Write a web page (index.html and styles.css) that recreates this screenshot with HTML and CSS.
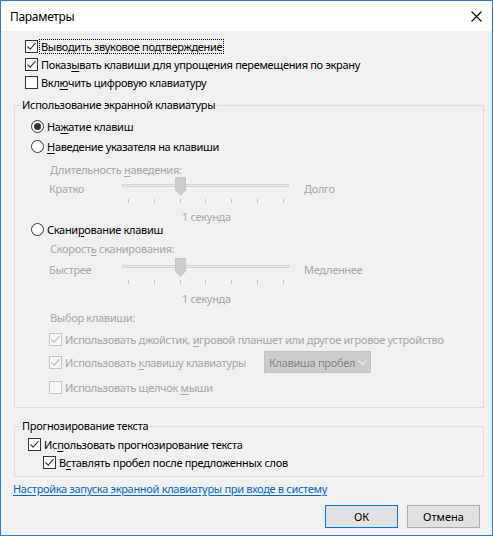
FILE: index.html
```html
<!DOCTYPE html>
<html lang="ru">
<head>
  <meta charset="UTF-8">
  <title>Параметры</title>
  <link rel="stylesheet" href="styles.css">
</head>

<body>

  <div class="window">

    <!-- Title bar -->
    <div class="titlebar">
      <span class="title">Параметры</span>
      <svg class="close" width="11" height="11" viewBox="0 0 11 11">
        <path d="M0.5 0.5 L10.5 10.5 M10.5 0.5 L0.5 10.5" stroke="#000" stroke-width="1.1" fill="none"/>
      </svg>
    </div>

    <div class="content">

      <!-- General options -->
      <div class="top-options">
        <div class="check">
          <span class="box"><svg viewBox="0 0 11 11"><path d="M1.5 5.5 L4.2 8.2 L9.5 2.2"/></svg></span>
          <span class="text focus">Выводить звуковое подтверждение</span>
        </div>
        <div class="check">
          <span class="box"><svg viewBox="0 0 11 11"><path d="M1.5 5.5 L4.2 8.2 L9.5 2.2"/></svg></span>
          <span class="text">Показ<u>ы</u>вать клавиши для упрощения перемещения по экрану</span>
        </div>
        <div class="check">
          <span class="box"></span>
          <span class="text">Вкл<u>ю</u>чить цифровую клавиатуру</span>
        </div>
      </div>

      <!-- On-screen keyboard mode -->
      <fieldset class="group group-mode">
        <legend>Использование экранной клавиатуры</legend>

        <div class="radio radio-first selected">
          <span class="dot"><span></span></span>
          <span class="text">На<u>ж</u>атие клавиш</span>
        </div>
        <div class="radio radio-second">
          <span class="dot"></span>
          <span class="text"><u>Н</u>аведение указателя на клавиши</span>
        </div>

        <div class="hint hint-hover">Длительность <u>н</u>аведения:</div>
        <div class="slider slider-hover">
          <span class="end-label">Кратко</span>
          <div class="track-area">
            <div class="track"></div>
            <svg class="thumb" width="11" height="19" viewBox="0 0 11 19">
              <polygon points="0.5,0.5 10.5,0.5 10.5,13 5.5,18.5 0.5,13"/>
            </svg>
            <div class="ticks"><i></i><i></i><i></i><i></i><i></i><i></i><i></i></div>
          </div>
          <span class="end-label end-right">Долго</span>
        </div>
        <div class="slider-value value-hover">1 секунда</div>

        <div class="radio radio-scan">
          <span class="dot"></span>
          <span class="text">Скани<u>р</u>ование клавиш</span>
        </div>

        <div class="hint hint-scan">Скорост<u>ь</u> сканирования:</div>
        <div class="slider slider-scan">
          <span class="end-label">Быстрее</span>
          <div class="track-area">
            <div class="track"></div>
            <svg class="thumb" width="11" height="19" viewBox="0 0 11 19">
              <polygon points="0.5,0.5 10.5,0.5 10.5,13 5.5,18.5 0.5,13"/>
            </svg>
            <div class="ticks"><i></i><i></i><i></i><i></i><i></i><i></i><i></i></div>
          </div>
          <span class="end-label end-right">Медленнее</span>
        </div>
        <div class="slider-value value-scan">1 секунда</div>

        <div class="hint hint-key">Выбор клавиши:</div>
        <div class="check disabled sub-check check-joystick">
          <span class="box"><svg viewBox="0 0 11 11"><path d="M1.5 5.5 L4.2 8.2 L9.5 2.2"/></svg></span>
          <span class="text">Использовать джойстик, <u>и</u>гровой планшет или другое игровое устройство</span>
        </div>
        <div class="check disabled sub-check check-key">
          <span class="box"><svg viewBox="0 0 11 11"><path d="M1.5 5.5 L4.2 8.2 L9.5 2.2"/></svg></span>
          <span class="text key-label">Использовать <u>к</u>лавишу клавиатуры</span>
          <div class="dropdown">
            <span class="dropdown-text">Клавиша пробел</span>
            <svg class="chevron" width="9" height="5" viewBox="0 0 9 5"><path d="M0.5 0.5 L4.5 4.5 L8.5 0.5"/></svg>
          </div>
        </div>
        <div class="check disabled sub-check check-mouse">
          <span class="box"></span>
          <span class="text">Использовать щелчок <u>м</u>ыши</span>
        </div>
      </fieldset>

      <!-- Text prediction -->
      <fieldset class="group group-predict">
        <legend>Прогнозирование текста</legend>
        <div class="check predict-main">
          <span class="box"><svg viewBox="0 0 11 11"><path d="M1.5 5.5 L4.2 8.2 L9.5 2.2"/></svg></span>
          <span class="text">Ис<u>п</u>ользовать прогнозирование текста</span>
        </div>
        <div class="check predict-space">
          <span class="box"><svg viewBox="0 0 11 11"><path d="M1.5 5.5 L4.2 8.2 L9.5 2.2"/></svg></span>
          <span class="text">В<u>с</u>тавлять пробел после предложенных слов</span>
        </div>
      </fieldset>

      <a class="link" href="#">Настройка запуска экранной клавиатуры при входе в систему</a>

      <div class="buttons">
        <button class="btn btn-default">ОК</button>
        <button class="btn">Отмена</button>
      </div>

    </div>
  </div>

</body>
</html>
```

FILE: styles.css
```css
body {
  margin: 0;
  background: #fff;
  font-family: "Noto Sans", "Liberation Sans", sans-serif;
  font-size: 11px;
  letter-spacing: -0.3px;
  color: #000;
}

u {
  text-decoration-thickness: 1px;
  text-underline-offset: 2px;
}

.window {
  width: 493px;
  height: 536px;
  box-sizing: border-box;
  border: 1px solid #2a7bc8;
  background: #f0f0f0;
  display: flex;
  flex-direction: column;
}

/* title bar */
.titlebar {
  height: 30px;
  flex: none;
  background: #fff;
  display: flex;
  align-items: center;
  justify-content: space-between;
  padding: 0 10px 0 9px;
  font-size: 12px;
}

.content {
  padding: 6px 8px 0 12px;
  display: flex;
  flex-direction: column;
}

/* checkboxes */
.check {
  display: flex;
  align-items: center;
  gap: 3px;
  height: 14px;
  white-space: nowrap;
}

.check .box {
  width: 13px;
  height: 13px;
  box-sizing: border-box;
  border: 1px solid #333;
  background: #fff;
  display: flex;
  flex: none;
}

.check .box svg {
  width: 11px;
  height: 11px;
  fill: none;
  stroke: #333;
  stroke-width: 1.1;
}

.check.disabled {
  color: #a6a6a6;
}

.check.disabled .box {
  border-color: #c6c6c6;
  background: #f7f7f7;
}

.check.disabled .box svg {
  stroke: #b9b9b9;
}

.top-options {
  margin-left: 12px;
  display: flex;
  flex-direction: column;
}

.top-options .check {
  height: 18px;
}

.focus {
  outline: 1px dotted #000;
  outline-offset: 0;
  padding: 0 1px;
  margin-left: -1px;
  line-height: 13px;
}

/* group boxes */
.group {
  margin: 0 0 0 1px;
  padding: 0;
  min-width: 0;
  width: 470px;
  box-sizing: border-box;
  border: 1px solid #dcdcdc;
  display: flex;
  flex-direction: column;
}

.group legend {
  margin-left: 5px;
  padding: 0 2px;
  line-height: 16px;
}

.group-mode {
  margin-top: 6px;
  padding-bottom: 13px;
}

.group-predict {
  margin-top: 10px;
  padding-bottom: 7px;
}

/* radio buttons */
.radio {
  display: flex;
  align-items: center;
  gap: 3px;
  height: 14px;
  margin-left: 16px;
}

.radio .dot {
  width: 13px;
  height: 13px;
  box-sizing: border-box;
  border: 1px solid #333;
  border-radius: 50%;
  background: #fff;
  display: flex;
  align-items: center;
  justify-content: center;
}

.radio.selected .dot span {
  width: 7px;
  height: 7px;
  border-radius: 50%;
  background: #333;
}

.radio-first { margin-top: 6px; }
.radio-second { margin-top: 6px; }
.radio-scan { margin-top: 0; }

/* greyed captions */
.hint {
  color: #a6a6a6;
  margin-left: 35px;
  line-height: 14px;
}

.hint-hover { margin-top: 10px; }
.hint-scan { margin-top: 6px; }
.hint-key { margin-top: 7px; }

/* sliders */
.slider {
  display: grid;
  grid-template-columns: 73px 167px auto;
  align-items: start;
  margin-left: 34px;
  color: #a6a6a6;
  line-height: 14px;
}

.slider-hover { margin-top: 5px; }
.slider-scan { margin-top: 7px; }

.end-right {
  padding-left: 15px;
}

.track-area {
  position: relative;
  height: 21px;
}

.track {
  margin-top: 2px;
  height: 3px;
  box-sizing: border-box;
  border: 1px solid #d4d4d4;
  background: #e7e7e7;
}

.thumb {
  position: absolute;
  left: 53px;
  top: -5px;
  fill: #cccccc;
  stroke: #c6c6c6;
}

.ticks {
  margin-top: 12px;
  display: flex;
  justify-content: space-between;
  padding: 0 5px 0 6px;
}

.ticks i {
  width: 1px;
  height: 4px;
  background: #c4c4c4;
}

.slider-value {
  color: #a6a6a6;
  margin-left: 167px;
  height: 10px;
  line-height: 10px;
}

.value-hover { margin-top: 9px; }
.value-scan { margin-top: 10px; }

/* key choice */
.sub-check {
  margin-left: 34px;
}

.check-joystick { margin-top: 7px; }

.check-key {
  margin-top: 5px;
  height: 22px;
}

.check-mouse { margin-top: 7px; }

.key-label {
  flex: none;
  width: 196px;
}

.dropdown {
  flex: none;
  width: 107px;
  height: 22px;
  box-sizing: border-box;
  border: 1px solid #c2c2c2;
  background: #cccccc;
  color: #838383;
  display: flex;
  align-items: center;
  padding: 0 3px 0 4px;
}

.dropdown-text {
  flex: 1;
}

.chevron {
  flex: none;
  fill: none;
  stroke: #ededed;
  stroke-width: 1.2;
}

/* text prediction */
.predict-main {
  margin-top: 3px;
  margin-left: 13px;
}

.predict-space {
  margin-top: 4px;
  margin-left: 28px;
}

.link {
  margin-top: 5px;
  line-height: 14px;
  color: #0066cc;
  text-decoration: underline;
  text-underline-offset: 2px;
  align-self: flex-start;
}

/* dialog buttons */
.buttons {
  margin-top: 9px;
  display: flex;
  justify-content: flex-end;
  gap: 9px;
  padding-right: 4px;
}

.btn {
  width: 73px;
  height: 23px;
  box-sizing: border-box;
  border: 1px solid #adadad;
  background: #e1e1e1;
  font: inherit;
  color: #000;
  padding: 0;
}

.btn-default {
  border-color: #0078d7;
}
```
